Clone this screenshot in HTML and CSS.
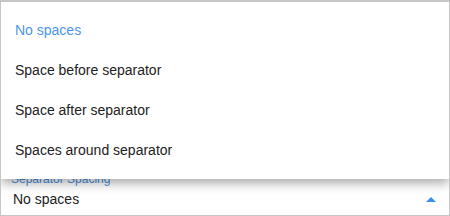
FILE: index.html
```html
<!DOCTYPE html>
<html lang="en">
<head>
  <meta charset="UTF-8">
  <title>Separator Spacing</title>
  <link rel="stylesheet" href="styles.css">
</head>
<body>
  <div class="frame">
    <!-- Select field -->
    <div class="field">
      <div class="field-label">Separator Spacing</div>
      <div class="field-row">
        <span class="field-value">No spaces</span>
        <span class="arrow"></span>
      </div>
    </div>

    <!-- Open dropdown menu -->
    <ul class="menu">
      <li class="item selected">No spaces</li>
      <li class="item">Space before separator</li>
      <li class="item">Space after separator</li>
      <li class="item">Spaces around separator</li>
    </ul>
  </div>
</body>
</html>
```

FILE: styles.css
```css
body {
  margin: 0;
  font-family: 'Liberation Sans', Arial, sans-serif;
  background: #fff;
}
.frame {
  position: relative;
  width: 450px;
  height: 216px;
  box-sizing: border-box;
  border: 1px solid #c6c6c6;
  border-top-width: 2px;
  display: flex;
  flex-direction: column;
  justify-content: flex-end;
  overflow: hidden;
}
.field {
  padding: 0 12px 6px 10px;
}
.field-label {
  font-size: 12px;
  line-height: 14px;
  color: #4a8fe0;
}
.field-row {
  display: flex;
  align-items: center;
  justify-content: space-between;
  margin-top: 3px;
  padding-left: 2px;
}
.field-value {
  font-size: 14px;
  line-height: 20px;
  color: #222;
}
.arrow {
  width: 0;
  height: 0;
  border-left: 5px solid transparent;
  border-right: 5px solid transparent;
  border-bottom: 5px solid #3d8ef0;
  margin-right: 1px;
}
.menu {
  position: absolute;
  top: 0;
  left: 0;
  right: 0;
  margin: 0;
  padding: 8px 0 9px;
  list-style: none;
  background: #fff;
  box-shadow: 0 4px 10px rgba(0, 0, 0, 0.35);
}
.item {
  height: 40px;
  line-height: 40px;
  padding-left: 14px;
  font-size: 14px;
  color: #222;
}
.item.selected {
  color: #4a96ee;
}
```
